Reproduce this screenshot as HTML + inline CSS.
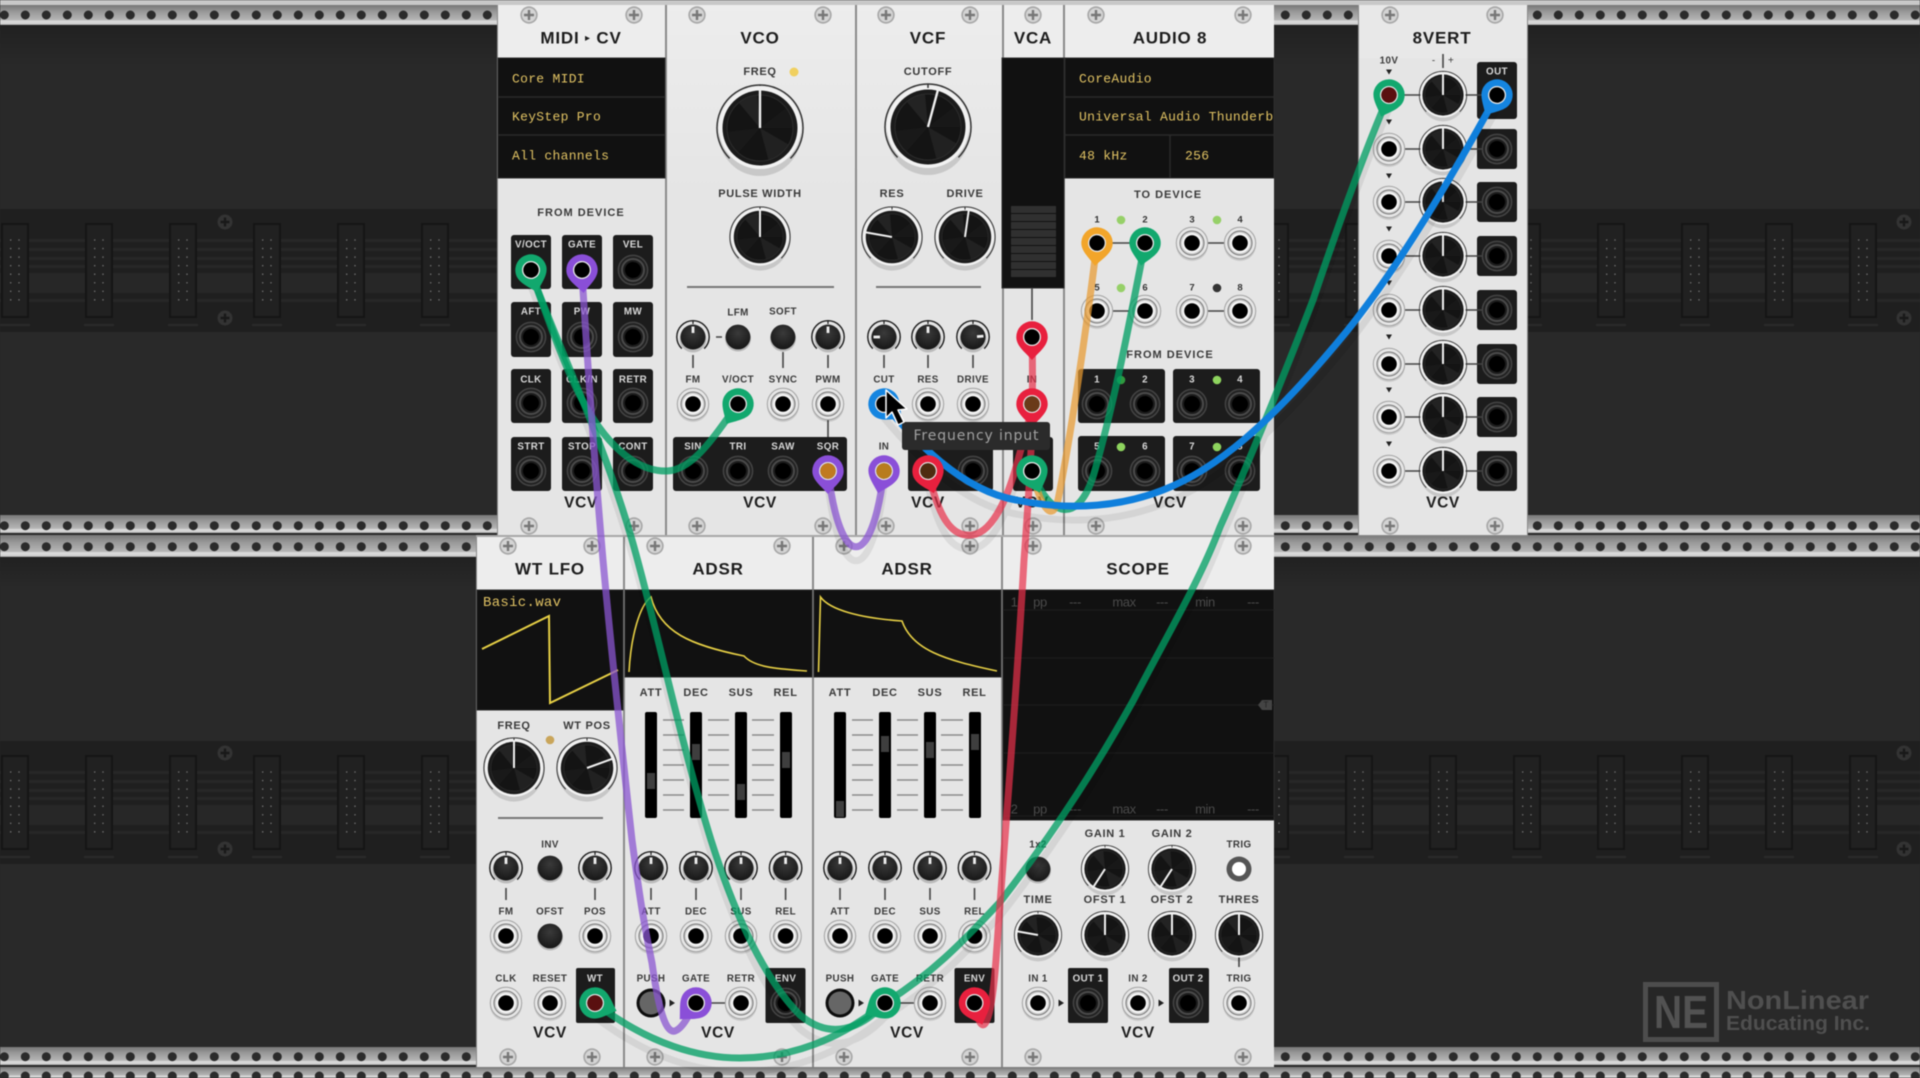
<!DOCTYPE html>
<html lang="en">
<head>
<meta charset="utf-8">
<title>VCV Rack patch</title>
<style>
html,body{margin:0;padding:0;background:#292929;width:1920px;height:1078px;overflow:hidden}
svg{display:block}
svg.root{filter:blur(.45px)}
text{font-family:"Liberation Sans","DejaVu Sans",sans-serif;text-anchor:middle;dominant-baseline:central}
.t{font-size:17px;font-weight:bold;fill:#1d1d1d;letter-spacing:.8px}
.h{font-size:11px;font-weight:bold;fill:#3a3a3a;letter-spacing:.7px}
.g{font-size:11px;font-weight:bold;fill:#3a3a3a;letter-spacing:1px}
.a{font-size:9.8px;font-weight:bold;fill:#3a3a3a;letter-spacing:.4px}
.w{font-size:9.8px;font-weight:bold;fill:#d8d8d8;letter-spacing:.4px}
.m{font-family:"Liberation Mono",monospace;font-size:13px;fill:#e0c263;text-anchor:start;letter-spacing:.3px}
.v{font-size:15.5px;font-weight:bold;fill:#1d1d1d;letter-spacing:.6px}
.s{font-size:13px;fill:#4a4a4a;letter-spacing:-.4px}
.n{font-size:9.5px;font-weight:bold;fill:#333}
</style>
</head>
<body>
<svg class="root" xmlns="http://www.w3.org/2000/svg" width="1920" height="1078" viewBox="0 0 1920 1078">
<defs>
<linearGradient id="rail" x1="0" y1="0" x2="0" y2="1">
<stop offset="0" stop-color="#777"/><stop offset=".35" stop-color="#9a9a9a"/><stop offset=".75" stop-color="#b5b5b5"/><stop offset=".8" stop-color="#dcdcdc"/><stop offset=".95" stop-color="#d0d0d0"/><stop offset="1" stop-color="#8a8a8a"/>
</linearGradient>
<linearGradient id="top" x1="0" y1="0" x2="0" y2="1"><stop offset="0" stop-color="#212121"/><stop offset="1" stop-color="#292929"/></linearGradient>
<linearGradient id="fade" x1="0" y1="0" x2="0" y2="1"><stop offset="0" stop-color="#ededed"/><stop offset="1" stop-color="#e5e5e5"/></linearGradient>
<radialGradient id="btn" cx=".5" cy=".35" r=".7"><stop offset="0" stop-color="#3a3a3a"/><stop offset="1" stop-color="#141414"/></radialGradient>
<pattern id="b1" patternUnits="userSpaceOnUse" x="0" y="209" width="84" height="123">
<rect width="84" height="123" fill="#1f1f1f"/>
<rect y="30" width="84" height="3" fill="#272727"/><rect y="39" width="84" height="3" fill="#272727"/><rect y="48" width="84" height="3" fill="#272727"/><rect y="56" width="84" height="3" fill="#272727"/><rect y="64" width="84" height="20" fill="#272727"/><rect y="90" width="84" height="3" fill="#272727"/>
<rect x="0" y="115" width="30" height="2" fill="#2a2a2a"/>
<rect x="2" y="15" width="26" height="93" fill="#212121" stroke="#151515" stroke-width="2"/>
<line x1="10.7" y1="31" x2="10.7" y2="92" stroke="#6e6e6e" stroke-width="1.6" stroke-linecap="round" stroke-dasharray="0 8.55"/>
<line x1="19" y1="31" x2="19" y2="92" stroke="#6e6e6e" stroke-width="1.6" stroke-linecap="round" stroke-dasharray="0 8.55"/>
</pattern>
<pattern id="b2" patternUnits="userSpaceOnUse" x="0" y="741" width="84" height="123">
<rect width="84" height="123" fill="#1f1f1f"/>
<rect y="30" width="84" height="3" fill="#272727"/><rect y="39" width="84" height="3" fill="#272727"/><rect y="48" width="84" height="3" fill="#272727"/><rect y="56" width="84" height="3" fill="#272727"/><rect y="64" width="84" height="20" fill="#272727"/><rect y="90" width="84" height="3" fill="#272727"/>
<rect x="0" y="115" width="30" height="2" fill="#2a2a2a"/>
<rect x="2" y="15" width="26" height="93" fill="#212121" stroke="#151515" stroke-width="2"/>
<line x1="10.7" y1="31" x2="10.7" y2="92" stroke="#6e6e6e" stroke-width="1.6" stroke-linecap="round" stroke-dasharray="0 8.55"/>
<line x1="19" y1="31" x2="19" y2="92" stroke="#6e6e6e" stroke-width="1.6" stroke-linecap="round" stroke-dasharray="0 8.55"/>
</pattern>
<g id="s"><circle r="8.7" fill="#a8a8a8"/><circle r="7" fill="#d4d4d4"/><path d="M-5 0H5M0-5V5" stroke="#777" stroke-width="2.4"/></g>
<g id="rs"><circle r="7.5" fill="#333"/><path d="M-4.5 0H4.5M0-4.5V4.5" stroke="#191919" stroke-width="2.4"/></g>
<g id="p"><circle cy="2" r="16" fill="#000" opacity=".12"/><circle r="15.7" fill="#e6e6e6" stroke="#a2a2a2" stroke-width="1"/><circle r="12" fill="#cfcfcf" stroke="#777" stroke-width="1"/><circle r="10" fill="#f7f7f7"/><circle r="7.8" fill="#000"/></g>
<g id="d"><circle r="14.6" fill="#212121" stroke="#444" stroke-width="1.5"/><circle r="11" fill="#1c1c1c" stroke="#4a4a4a" stroke-width="2"/><circle r="8" fill="#000"/></g>
<g id="k"><circle cy="7" r="41" fill="#000" opacity=".13"/><circle r="41" fill="#f2f2f2"/><path d="M-30.4 30.4A43 43 0 1 1 30.4 30.4" fill="none" stroke="#333" stroke-width="1.5"/><line x1="0" y1="-43" x2="0" y2="-39" stroke="#333" stroke-width="1.5"/><circle r="37.5" fill="#1b1b1b"/><circle r="33" fill="#141414"/><path d="M0 0L-21-25A33 33 0 0 1-3-33Z" fill="#232323"/><path d="M0 0L28.6 16.5A33 33 0 0 1 8.5 31.9Z" fill="#212121"/><path d="M0 0L33 0A33 33 0 0 0 26-20Z" fill="#181818"/><path d="M0 0L-33 4A33 33 0 0 0-22 25Z" fill="#191919"/><circle r="33" fill="none" stroke="#2c2c2c" stroke-width="1"/></g>
<g id="k30"><use href="#k" transform="scale(.7)"/></g>
<g id="k24"><use href="#k" transform="scale(.55)"/></g>
<line id="q" x1="0" y1="0" x2="0" y2="-42" stroke="#f0f0f0" stroke-width="2.4"/>
<line id="q30" x1="0" y1="0" x2="0" y2="-28" stroke="#f0f0f0" stroke-width="2"/>
<line id="q24" x1="0" y1="0" x2="0" y2="-23" stroke="#f0f0f0" stroke-width="2"/>
<g id="t"><circle cy="2" r="13.5" fill="#000" opacity=".18"/><path d="M-11.2 11.6A16.2 16.2 0 1 1 11.2 11.6" fill="none" stroke="#1d1d1d" stroke-width="1.4"/><line x1="0" y1="-16" x2="0" y2="-13" stroke="#1d1d1d" stroke-width="1.2"/><circle r="12.5" fill="url(#btn)"/></g>
<line id="tp" x1="0" y1="-4" x2="0" y2="-10.5" stroke="#eee" stroke-width="2.8"/>
<g id="b"><circle cy="1.5" r="13" fill="#000" opacity=".2"/><circle r="12.4" fill="url(#btn)"/></g>
<g id="n"><path d="M-15.7 0A15.7 15.7 0 1 1 15.7 0C15.7 9 7 15 0 23C-7 15-15.7 9-15.7 0Z"/><circle r="9" fill="#e8e8e8"/><circle r="7.7" fill="#000"/></g>
<path id="tr" d="M-3-2.5H3L0 2.5Z" fill="#222"/>
<path id="tr2" d="M-2.5-3.5V3.5L3 0Z" fill="#222"/>
<path id="cG1" d="M531 272C545 310 565 370 585 405C610 450 640 472 667 471C695 470 718 430 738 404"/>
<path id="cG2" d="M531 272C555 340 600 430 632 540C655 620 680 740 711 840C730 900 760 975 800 1015C830 1040 860 1030 885 1003"/>
<path id="cG3" d="M595 1003C650 1045 700 1058 740 1058C790 1058 840 1040 885 1003"/>
<path id="cG4" d="M885 1003C930 975 960 945 1000 902C1060 825 1100 760 1133 701C1170 630 1200 580 1220 527C1250 460 1290 360 1313 300C1340 220 1365 150 1389 95"/>
<path id="cG5" d="M1145 243C1130 320 1115 400 1095 470C1080 525 1050 520 1032 471"/>
<path id="cO" d="M1097 243C1085 340 1070 440 1058 500C1052 525 1040 505 1032 471"/>
<path id="cB" d="M884 404C915 440 960 490 1016 500C1075 512 1125 505 1163 490C1215 470 1270 425 1347 331C1400 265 1450 180 1497 95"/>
<path id="cP1" d="M582 270L583 290C590 400 596 480 603 560C612 660 622 750 632 840C640 900 645 930 652 963C660 1020 668 1036 677 1030C685 1025 690 1012 696 1003"/>
<path id="cP2" d="M828 471C840 572 872 572 884 471"/>
<path id="cR1" d="M928 471C940 525 955 537 972 535C995 532 1010 490 1018 460C1024 438 1030 420 1032 404"/>
<path id="cR2" d="M1032 337C1034 420 1030 480 1024 560C1015 720 1005 830 996 960C990 1040 980 1035 974.5 1003"/>
</defs>

<!-- rack background -->
<rect width="1920" height="1078" fill="#292929"/>
<rect y="25" width="1920" height="40" fill="url(#top)"/>
<rect y="557" width="1920" height="30" fill="url(#top)"/>
<rect y="209" width="1920" height="123" fill="url(#b1)"/>
<rect y="741" width="1920" height="123" fill="url(#b2)"/>
<use href="#rs" x="225" y="222"/><use href="#rs" x="225" y="318"/><use href="#rs" x="1904" y="222"/><use href="#rs" x="1904" y="318"/>
<use href="#rs" x="225" y="753"/><use href="#rs" x="225" y="849"/><use href="#rs" x="1904" y="753"/><use href="#rs" x="1904" y="849"/>

<!-- rails -->
<rect width="1920" height="5" fill="#c8c8c8"/>
<rect y="5" width="1920" height="20" fill="url(#rail)"/>
<rect y="515" width="1920" height="18" fill="url(#rail)"/>
<rect y="535" width="1920" height="22" fill="url(#rail)"/>
<rect y="1047" width="1920" height="18" fill="url(#rail)"/>
<rect y="1067" width="1920" height="11" fill="url(#rail)"/>
<g stroke="#2b2b2b" stroke-width="9" stroke-linecap="round" stroke-dasharray="0 21">
<line x1="4.3" y1="15" x2="1920" y2="15"/><line x1="4.3" y1="525.7" x2="1920" y2="525.7"/><line x1="4.3" y1="546.7" x2="1920" y2="546.7"/><line x1="4.3" y1="1056.7" x2="1920" y2="1056.7"/><line x1="4.3" y1="1076" x2="1920" y2="1076"/>
</g>

<!-- module backings -->
<rect x="497" y="5" width="777" height="531" fill="#8a8a8a"/>
<rect x="476" y="537" width="798" height="530" fill="#8a8a8a"/>
<rect x="1358" y="5" width="170" height="531" fill="#8a8a8a"/>
<rect x="476" y="535" width="798" height="2" fill="#a8a8a8"/>
<g fill="#e5e5e5">
<rect x="498" y="5" width="167" height="530"/><rect x="1004" y="5" width="59" height="530"/><rect x="1065" y="5" width="209" height="530"/><rect x="1359" y="5" width="168" height="530"/>
<rect x="667" y="200" width="188" height="335"/><rect x="857" y="200" width="145" height="335"/>
<rect x="477" y="537" width="146" height="530"/><rect x="625" y="537" width="187" height="530"/><rect x="814" y="537" width="187" height="530"/><rect x="1003" y="537" width="271" height="530"/>
</g>
<rect x="667" y="5" width="188" height="195" fill="url(#fade)"/><rect x="857" y="5" width="145" height="195" fill="url(#fade)"/>
<g fill="#ededed">
<rect x="498" y="5" width="167" height="53"/><rect x="1004" y="5" width="59" height="53"/><rect x="1065" y="5" width="209" height="53"/><rect x="1359" y="5" width="168" height="53" fill="#e8e8e8"/>
<rect x="477" y="537" width="146" height="53"/><rect x="625" y="537" width="187" height="53"/><rect x="814" y="537" width="187" height="53"/><rect x="1003" y="537" width="271" height="53"/>
</g>

<!-- displays -->
<g fill="#111" stroke="#2c2c2c" stroke-width="1">
<rect x="498" y="58" width="167" height="120"/><rect x="1002" y="58" width="62" height="230"/><rect x="1065" y="58" width="209" height="120"/>
<rect x="477" y="590" width="146" height="120"/><rect x="625" y="590" width="187" height="87"/><rect x="814" y="590" width="187" height="87"/><rect x="1003" y="590" width="271" height="230"/>
</g>
<g stroke="#2a2a2a" stroke-width="1.5">
<path d="M498 97H665M498 135H665M1065 97H1274M1065 135H1274M1170 135V178"/>
<path d="M1003 610H1274M1003 658H1274M1003 705H1274M1003 753H1274M1003 816H1274" stroke-width="1" stroke="#1e1e1e"/>
</g>
<g fill="#303030"><rect x="1011" y="206" width="45" height="7"/><rect x="1011" y="214" width="45" height="7"/><rect x="1011" y="222" width="45" height="7"/><rect x="1011" y="230" width="45" height="7"/><rect x="1011" y="238" width="45" height="7"/><rect x="1011" y="246" width="45" height="7"/><rect x="1011" y="254" width="45" height="7"/><rect x="1011" y="262" width="45" height="7"/><rect x="1011" y="270" width="45" height="7"/></g>

<!-- dark port boxes -->
<g fill="#1c1c1c">
<rect x="511" y="235" width="40" height="54" rx="3"/><rect x="562" y="235" width="40" height="54" rx="3"/><rect x="613" y="235" width="40" height="54" rx="3"/>
<rect x="511" y="302" width="40" height="55" rx="3"/><rect x="562" y="302" width="40" height="55" rx="3"/><rect x="613" y="302" width="40" height="55" rx="3"/>
<rect x="511" y="369" width="40" height="54" rx="3"/><rect x="562" y="369" width="40" height="54" rx="3"/><rect x="613" y="369" width="40" height="54" rx="3"/>
<rect x="511" y="437" width="40" height="54" rx="3"/><rect x="562" y="437" width="40" height="54" rx="3"/><rect x="613" y="437" width="40" height="54" rx="3"/>
<rect x="673" y="437" width="174" height="54" rx="3"/>
<rect x="908" y="437" width="85" height="54" rx="3"/>
<rect x="1013" y="437" width="40" height="54" rx="3"/>
<rect x="1078" y="369" width="87" height="54" rx="3"/><rect x="1173" y="369" width="87" height="54" rx="3"/><rect x="1078" y="436" width="87" height="55" rx="3"/><rect x="1173" y="436" width="87" height="55" rx="3"/>
<rect x="1477" y="62" width="40" height="57" rx="3"/><rect x="1477" y="129" width="40" height="40" rx="3"/><rect x="1477" y="182" width="40" height="40" rx="3"/><rect x="1477" y="236" width="40" height="40" rx="3"/><rect x="1477" y="290" width="40" height="40" rx="3"/><rect x="1477" y="344" width="40" height="40" rx="3"/><rect x="1477" y="397" width="40" height="40" rx="3"/><rect x="1477" y="451" width="40" height="40" rx="3"/>
<rect x="576" y="968" width="39" height="55" rx="2"/><rect x="765.5" y="968" width="40" height="55" rx="2"/><rect x="954.5" y="968" width="40" height="55" rx="2"/><rect x="1068" y="968" width="40" height="55" rx="2"/><rect x="1169" y="968" width="40" height="55" rx="2"/>
</g>

<!-- connector lines -->
<g stroke="#444" stroke-width="1.6" fill="none">
<path d="M687 287H834M876 287H981M498 818H603" stroke="#777" stroke-width="2"/>
<path d="M693 355V368M783 352V368M828 355V368M828 420V437M716 337H722"/>
<path d="M884 355V368M928 355V368M973 355V368M1032 288V320"/>
<path d="M1097 243H1145M1192 243H1240M1097 311H1145M1192 311H1240"/>
<path d="M1389 95H1497M1389 149H1497M1389 202H1497M1389 256H1497M1389 310H1497M1389 364H1497M1389 417H1497M1389 471H1497"/>
<path d="M506 888V900M595 888V900M651 888V900M696 888V900M741 888V900M785.6 888V900M840 888V900M885 888V900M930 888V900M974.5 888V900M1239 955V967"/>
<path d="M696 1003H741M885 1003H930M1443 54V68"/>
</g>

<!-- ADSR ticks -->
<g stroke="#8c8c8c" stroke-width="1.6">
<path d="M663 720H684M663 735H684M663 750H684M663 765H684M663 780H684M663 795H684M663 810H684M708 720H729M708 735H729M708 750H729M708 765H729M708 780H729M708 795H729M708 810H729M752 720H774M752 735H774M752 750H774M752 765H774M752 780H774M752 795H774M752 810H774"/>
<path d="M852 720H873M852 735H873M852 750H873M852 765H873M852 780H873M852 795H873M852 810H873M897 720H918M897 735H918M897 750H918M897 765H918M897 780H918M897 795H918M897 810H918M941 720H963M941 735H963M941 750H963M941 765H963M941 780H963M941 795H963M941 810H963"/>
</g>
<g fill="#000">
<rect x="645" y="712" width="12" height="106" rx="2"/><rect x="690" y="712" width="12" height="106" rx="2"/><rect x="735" y="712" width="12" height="106" rx="2"/><rect x="780" y="712" width="12" height="106" rx="2"/>
<rect x="834" y="712" width="12" height="106" rx="2"/><rect x="879" y="712" width="12" height="106" rx="2"/><rect x="924" y="712" width="12" height="106" rx="2"/><rect x="969" y="712" width="12" height="106" rx="2"/>
</g>
<g fill="#3e3e3e">
<rect x="647" y="773" width="8" height="16"/><rect x="692" y="744" width="8" height="16"/><rect x="737" y="784" width="8" height="16"/><rect x="782" y="752" width="8" height="16"/>
<rect x="836" y="801" width="8" height="16"/><rect x="881" y="736" width="8" height="16"/><rect x="926" y="742" width="8" height="16"/><rect x="971" y="734" width="8" height="16"/>
</g>

<!-- screws -->
<use href="#s" x="529" y="15"/><use href="#s" x="634" y="15"/><use href="#s" x="697" y="15"/><use href="#s" x="823" y="15"/><use href="#s" x="886" y="15"/><use href="#s" x="970" y="15"/><use href="#s" x="1033" y="15"/><use href="#s" x="1096" y="15"/><use href="#s" x="1243" y="15"/><use href="#s" x="1390" y="15"/><use href="#s" x="1495" y="15"/>
<use href="#s" x="529" y="526"/><use href="#s" x="634" y="526"/><use href="#s" x="697" y="526"/><use href="#s" x="823" y="526"/><use href="#s" x="886" y="526"/><use href="#s" x="970" y="526"/><use href="#s" x="1033" y="526"/><use href="#s" x="1096" y="526"/><use href="#s" x="1243" y="526"/><use href="#s" x="1390" y="526"/><use href="#s" x="1495" y="526"/>
<use href="#s" x="508" y="546"/><use href="#s" x="592" y="546"/><use href="#s" x="655" y="546"/><use href="#s" x="782" y="546"/><use href="#s" x="844" y="546"/><use href="#s" x="970" y="546"/><use href="#s" x="1033" y="546"/><use href="#s" x="1243" y="546"/>
<use href="#s" x="508" y="1057"/><use href="#s" x="592" y="1057"/><use href="#s" x="655" y="1057"/><use href="#s" x="782" y="1057"/><use href="#s" x="844" y="1057"/><use href="#s" x="970" y="1057"/><use href="#s" x="1033" y="1057"/><use href="#s" x="1243" y="1057"/>

<!-- titles -->
<text class="t" x="581" y="38">MIDI <tspan style="font-size:10px">▸</tspan> CV</text><text class="t" x="760" y="38">VCO</text><text class="t" x="928" y="38">VCF</text><text class="t" x="1033" y="38">VCA</text><text class="t" x="1170" y="38">AUDIO 8</text><text class="t" x="1442" y="38">8VERT</text>
<text class="t" x="550" y="569">WT LFO</text><text class="t" x="718" y="569">ADSR</text><text class="t" x="907" y="569">ADSR</text><text class="t" x="1138" y="569">SCOPE</text>

<!-- mono text -->
<text class="m" x="512" y="79">Core MIDI</text><text class="m" x="512" y="117">KeyStep Pro</text><text class="m" x="512" y="156">All channels</text>
<text class="m" x="1079" y="79">CoreAudio</text>
<svg x="1065" y="98" width="209" height="36"><text class="m" x="14" y="19">Universal Audio Thunderbolt</text></svg>
<text class="m" x="1079" y="156">48 kHz</text><text class="m" x="1185" y="156">256</text>
<text class="m" x="483" y="603" style="font-size:14px">Basic.wav</text>

<!-- labels MIDI -->
<text class="g" x="581" y="213">FROM DEVICE</text>
<text class="w" x="531" y="245">V/OCT</text><text class="w" x="582" y="245">GATE</text><text class="w" x="633" y="245">VEL</text>
<text class="w" x="531" y="312">AFT</text><text class="w" x="582" y="312">PW</text><text class="w" x="633" y="312">MW</text>
<text class="w" x="531" y="380">CLK</text><text class="w" x="582" y="380">CLK/N</text><text class="w" x="633" y="380">RETR</text>
<text class="w" x="531" y="447">STRT</text><text class="w" x="582" y="447">STOP</text><text class="w" x="633" y="447">CONT</text>
<!-- VCO -->
<text class="h" x="760" y="72">FREQ</text><circle cx="794" cy="72" r="4.5" fill="#f0d060"/>
<text class="h" x="760" y="194">PULSE WIDTH</text>
<text class="a" x="738" y="313">LFM</text><text class="a" x="783" y="312">SOFT</text>
<text class="a" x="693" y="380">FM</text><text class="a" x="738" y="380">V/OCT</text><text class="a" x="783" y="380">SYNC</text><text class="a" x="828" y="380">PWM</text>
<text class="w" x="693" y="447">SIN</text><text class="w" x="738" y="447">TRI</text><text class="w" x="783" y="447">SAW</text><text class="w" x="828" y="447">SQR</text>
<!-- VCF -->
<text class="h" x="928" y="72">CUTOFF</text><text class="h" x="892" y="194">RES</text><text class="h" x="965" y="194">DRIVE</text>
<text class="a" x="884" y="380">CUT</text><text class="a" x="928" y="380">RES</text><text class="a" x="973" y="380">DRIVE</text><text class="a" x="884" y="447">IN</text>
<text class="a" x="1032" y="380">IN</text>
<!-- Audio -->
<text class="g" x="1168" y="195">TO DEVICE</text><text class="g" x="1170" y="355">FROM DEVICE</text>
<text class="n" x="1097" y="220">1</text><text class="n" x="1145" y="220">2</text><text class="n" x="1192" y="220">3</text><text class="n" x="1240" y="220">4</text>
<text class="n" x="1097" y="288">5</text><text class="n" x="1145" y="288">6</text><text class="n" x="1192" y="288">7</text><text class="n" x="1240" y="288">8</text>
<circle cx="1121" cy="220" r="4.3" fill="#96d068"/><circle cx="1217" cy="220" r="4.3" fill="#96d068"/><circle cx="1121" cy="288" r="4.3" fill="#96d068"/><circle cx="1217" cy="288" r="4.3" fill="#333"/>
<text class="w" x="1097" y="380">1</text><text class="w" x="1145" y="380">2</text><text class="w" x="1192" y="380">3</text><text class="w" x="1240" y="380">4</text>
<text class="w" x="1097" y="447">5</text><text class="w" x="1145" y="447">6</text><text class="w" x="1192" y="447">7</text><text class="w" x="1240" y="447">8</text>
<circle cx="1121" cy="380" r="4.3" fill="#2f9a3f"/><circle cx="1217" cy="380" r="4.3" fill="#8ed45e"/><circle cx="1121" cy="447" r="4.3" fill="#8ed45e"/><circle cx="1217" cy="447" r="4.3" fill="#8ed45e"/>
<!-- 8VERT -->
<text class="a" x="1389" y="61">10V</text><text class="a" x="1443" y="61" xml:space="preserve" style="font-weight:normal">-    +</text><text class="w" x="1497" y="72">OUT</text>
<use href="#tr" x="1389" y="72"/><use href="#tr" x="1389" y="122"/><use href="#tr" x="1389" y="176"/><use href="#tr" x="1389" y="229"/><use href="#tr" x="1389" y="283"/><use href="#tr" x="1389" y="337"/><use href="#tr" x="1389" y="390"/><use href="#tr" x="1389" y="444"/>
<!-- WT LFO -->
<text class="h" x="514" y="726">FREQ</text><text class="h" x="587" y="726">WT POS</text><circle cx="550" cy="740" r="4.3" fill="#c9a55a"/>
<text class="a" x="550" y="845">INV</text><text class="a" x="506" y="912">FM</text><text class="a" x="550" y="912">OFST</text><text class="a" x="595" y="912">POS</text>
<text class="a" x="506" y="979">CLK</text><text class="a" x="550" y="979">RESET</text><text class="w" x="595" y="979">WT</text>
<!-- ADSR 1 -->
<text class="h" x="651" y="693">ATT</text><text class="h" x="696" y="693">DEC</text><text class="h" x="741" y="693">SUS</text><text class="h" x="785.6" y="693">REL</text>
<text class="a" x="651" y="912">ATT</text><text class="a" x="696" y="912">DEC</text><text class="a" x="741" y="912">SUS</text><text class="a" x="785.6" y="912">REL</text>
<text class="a" x="651" y="979">PUSH</text><text class="a" x="696" y="979">GATE</text><text class="a" x="741" y="979">RETR</text><text class="w" x="785.6" y="979">ENV</text>
<!-- ADSR 2 -->
<text class="h" x="840" y="693">ATT</text><text class="h" x="885" y="693">DEC</text><text class="h" x="930" y="693">SUS</text><text class="h" x="974.5" y="693">REL</text>
<text class="a" x="840" y="912">ATT</text><text class="a" x="885" y="912">DEC</text><text class="a" x="930" y="912">SUS</text><text class="a" x="974.5" y="912">REL</text>
<text class="a" x="840" y="979">PUSH</text><text class="a" x="885" y="979">GATE</text><text class="a" x="930" y="979">RETR</text><text class="w" x="974.5" y="979">ENV</text>
<!-- Scope -->
<text class="s" x="1014" y="602">1</text><text class="s" x="1040" y="602">pp</text><text class="s" x="1075" y="602">---</text><text class="s" x="1124" y="602">max</text><text class="s" x="1162" y="602">---</text><text class="s" x="1205" y="602">min</text><text class="s" x="1253" y="602">---</text>
<text class="s" x="1014" y="809">2</text><text class="s" x="1040" y="809">pp</text><text class="s" x="1075" y="809">---</text><text class="s" x="1124" y="809">max</text><text class="s" x="1162" y="809">---</text><text class="s" x="1205" y="809">min</text><text class="s" x="1253" y="809">---</text>
<path d="M1272 700H1262L1258 705L1262 710H1272Z" fill="#444"/><text x="1266" y="705" style="font-size:8px;fill:#222">T</text>
<text class="a" x="1038" y="845">1x2</text><text class="h" x="1105" y="834">GAIN 1</text><text class="h" x="1172" y="834">GAIN 2</text><text class="a" x="1239" y="845">TRIG</text>
<text class="h" x="1038" y="900">TIME</text><text class="h" x="1105" y="900">OFST 1</text><text class="h" x="1172" y="900">OFST 2</text><text class="h" x="1239" y="900">THRES</text>
<text class="a" x="1038" y="979">IN 1</text><text class="w" x="1088" y="979">OUT 1</text><text class="a" x="1138" y="979">IN 2</text><text class="w" x="1188" y="979">OUT 2</text><text class="a" x="1239" y="979">TRIG</text>
<use href="#tr2" x="1061" y="1003"/><use href="#tr2" x="1161" y="1003"/><use href="#tr2" x="672" y="1003"/><use href="#tr2" x="861" y="1003"/>

<!-- VCV logos -->
<text class="v" x="581" y="503">VCV</text><text class="v" x="760" y="503">VCV</text><text class="v" x="928" y="503">VCV</text><text class="v" x="1032" y="503">VCV</text><text class="v" x="1170" y="503">VCV</text><text class="v" x="1443" y="503">VCV</text>
<text class="v" x="550" y="1033">VCV</text><text class="v" x="718" y="1033">VCV</text><text class="v" x="907" y="1033">VCV</text><text class="v" x="1138" y="1033">VCV</text>

<!-- waveforms -->
<g fill="none" stroke="#e6cf45">
<path d="M482 649L549 616L550 703L618 670" stroke-width="2"/>
<path d="M629 672C631 635 640 605 651 597C660 632 690 645 744 656C755 668 780 669 807 671" stroke-width="1.6"/>
<path d="M818.5 672L820.5 597C830 610 860 618 902 621C912 650 945 660 997 671" stroke-width="1.6"/>
</g>

<!-- large and medium knobs -->
<use href="#k" x="760" y="128"/><use href="#q" transform="translate(760 128)"/>
<use href="#k30" x="760" y="237"/><use href="#q30" transform="translate(760 237)"/>
<use href="#k" x="928" y="127"/><use href="#q" transform="translate(928 127) rotate(15)"/>
<use href="#k30" x="892" y="237"/><use href="#q30" transform="translate(892 237) rotate(-80)"/>
<use href="#k30" x="965" y="237"/><use href="#q30" transform="translate(965 237) rotate(8)"/>
<use href="#k30" x="514" y="768"/><use href="#q30" transform="translate(514 768)"/>
<use href="#k30" x="587" y="768"/><use href="#q30" transform="translate(587 768) rotate(70)"/>
<use href="#k24" x="1105" y="869"/><use href="#q24" transform="translate(1105 869) rotate(213)"/>
<use href="#k24" x="1172" y="869"/><use href="#q24" transform="translate(1172 869) rotate(213)"/>
<use href="#k24" x="1038" y="935"/><use href="#q24" transform="translate(1038 935) rotate(-80)"/>
<use href="#k24" x="1105" y="935"/><use href="#q24" transform="translate(1105 935)"/>
<use href="#k24" x="1172" y="935"/><use href="#q24" transform="translate(1172 935)"/>
<use href="#k24" x="1239" y="935"/><use href="#q24" transform="translate(1239 935)"/>
<use href="#k24" x="1443" y="95"/><use href="#q24" transform="translate(1443 95)"/>
<use href="#k24" x="1443" y="149"/><use href="#q24" transform="translate(1443 149)"/>
<use href="#k24" x="1443" y="202"/><use href="#q24" transform="translate(1443 202)"/>
<use href="#k24" x="1443" y="256"/><use href="#q24" transform="translate(1443 256)"/>
<use href="#k24" x="1443" y="310"/><use href="#q24" transform="translate(1443 310)"/>
<use href="#k24" x="1443" y="364"/><use href="#q24" transform="translate(1443 364)"/>
<use href="#k24" x="1443" y="417"/><use href="#q24" transform="translate(1443 417)"/>
<use href="#k24" x="1443" y="471"/><use href="#q24" transform="translate(1443 471)"/>

<!-- trim knobs -->
<use href="#t" x="693" y="337"/><use href="#tp" x="693" y="337"/><use href="#t" x="828" y="337"/><use href="#tp" x="828" y="337"/>
<use href="#t" x="884" y="337"/><use href="#tp" transform="translate(884 337) rotate(-90)"/><use href="#t" x="928" y="337"/><use href="#tp" x="928" y="337"/><use href="#t" x="973" y="337"/><use href="#tp" transform="translate(973 337) rotate(85)"/>
<use href="#t" x="506" y="868"/><use href="#tp" x="506" y="868"/><use href="#t" x="595" y="868"/><use href="#tp" x="595" y="868"/>
<use href="#t" x="651" y="868"/><use href="#tp" x="651" y="868"/><use href="#t" x="696" y="868"/><use href="#tp" x="696" y="868"/><use href="#t" x="741" y="868"/><use href="#tp" x="741" y="868"/><use href="#t" x="785.6" y="868"/><use href="#tp" x="785.6" y="868"/>
<use href="#t" x="840" y="868"/><use href="#tp" x="840" y="868"/><use href="#t" x="885" y="868"/><use href="#tp" x="885" y="868"/><use href="#t" x="930" y="868"/><use href="#tp" x="930" y="868"/><use href="#t" x="974.5" y="868"/><use href="#tp" x="974.5" y="868"/>

<!-- buttons -->
<use href="#b" x="738" y="337"/><use href="#b" x="783" y="337"/><use href="#b" x="550" y="868"/><use href="#b" x="550" y="936"/><use href="#b" x="1038" y="869"/>
<circle cx="1239" cy="869" r="12.5" fill="#555"/><circle cx="1239" cy="869" r="7" fill="#fff"/>
<circle cx="651" cy="1003" r="14.5" fill="#0d0d0d"/><circle cx="651" cy="1003" r="11.5" fill="#666"/>
<circle cx="840" cy="1003" r="14.5" fill="#0d0d0d"/><circle cx="840" cy="1003" r="11.5" fill="#666"/>

<!-- silver ports -->
<use href="#p" x="693" y="404"/><use href="#p" x="783" y="404"/><use href="#p" x="828" y="404"/><use href="#p" x="928" y="404"/><use href="#p" x="973" y="404"/>
<use href="#p" x="1192" y="243"/><use href="#p" x="1240" y="243"/><use href="#p" x="1097" y="311"/><use href="#p" x="1145" y="311"/><use href="#p" x="1192" y="311"/><use href="#p" x="1240" y="311"/>
<use href="#p" x="1389" y="149"/><use href="#p" x="1389" y="202"/><use href="#p" x="1389" y="256"/><use href="#p" x="1389" y="310"/><use href="#p" x="1389" y="364"/><use href="#p" x="1389" y="417"/><use href="#p" x="1389" y="471"/>
<use href="#p" x="506" y="936"/><use href="#p" x="595" y="936"/><use href="#p" x="506" y="1003"/><use href="#p" x="550" y="1003"/>
<use href="#p" x="651" y="936"/><use href="#p" x="696" y="936"/><use href="#p" x="741" y="936"/><use href="#p" x="785.6" y="936"/><use href="#p" x="741" y="1003"/>
<use href="#p" x="840" y="936"/><use href="#p" x="885" y="936"/><use href="#p" x="930" y="936"/><use href="#p" x="974.5" y="936"/><use href="#p" x="930" y="1003"/>
<use href="#p" x="1038" y="1003"/><use href="#p" x="1138" y="1003"/><use href="#p" x="1239" y="1003"/>

<!-- dark ports -->
<use href="#d" x="633" y="270"/>
<use href="#d" x="531" y="337"/><use href="#d" x="582" y="337"/><use href="#d" x="633" y="337"/>
<use href="#d" x="531" y="403"/><use href="#d" x="582" y="403"/><use href="#d" x="633" y="403"/>
<use href="#d" x="531" y="471"/><use href="#d" x="582" y="471"/><use href="#d" x="633" y="471"/>
<use href="#d" x="693" y="471"/><use href="#d" x="738" y="471"/><use href="#d" x="783" y="471"/><use href="#d" x="973" y="471"/>
<use href="#d" x="1097" y="404"/><use href="#d" x="1145" y="404"/><use href="#d" x="1192" y="404"/><use href="#d" x="1240" y="404"/><use href="#d" x="1097" y="471"/><use href="#d" x="1145" y="471"/><use href="#d" x="1192" y="471"/><use href="#d" x="1240" y="471"/>
<use href="#d" x="1497" y="149"/><use href="#d" x="1497" y="202"/><use href="#d" x="1497" y="256"/><use href="#d" x="1497" y="310"/><use href="#d" x="1497" y="364"/><use href="#d" x="1497" y="417"/><use href="#d" x="1497" y="471"/>
<use href="#d" x="785.6" y="1003"/><use href="#d" x="1088" y="1003"/><use href="#d" x="1188" y="1003"/>

<!-- cable shadows -->
<g fill="none" stroke="#000" stroke-width="7" opacity=".07" transform="translate(0 14)">
<use href="#cG3"/><use href="#cG4"/><use href="#cB"/><use href="#cR1"/><use href="#cP2"/><use href="#cG2"/>
</g>

<!-- cables -->
<g fill="none" stroke-width="7" stroke-linecap="round">
<g stroke="#009e63"><use href="#cG1" opacity=".76"/><use href="#cG2" opacity=".76"/><use href="#cG3" opacity=".76"/><use href="#cG4" opacity=".76"/><use href="#cG5" opacity=".76"/></g>
<use href="#cO" stroke="#e89a30" opacity=".72"/>
<g stroke="#8a55d0"><use href="#cP1" opacity=".75"/><use href="#cP2" opacity=".75"/></g>
<g stroke="#e8304a"><use href="#cR1" opacity=".7"/><use href="#cR2" opacity=".7"/></g>
<use href="#cB" stroke="#0f7fdc"/>
</g>

<!-- plugs -->
<g fill="#12a86e">
<use href="#n" transform="translate(531 270) rotate(-15)"/><use href="#n" transform="translate(738 404) rotate(30)"/><use href="#n" transform="translate(1032 471) rotate(-20)"/><use href="#n" transform="translate(1145 243) rotate(10)"/><use href="#n" transform="translate(1389 95) rotate(20)"/><use href="#n" transform="translate(595 1003) rotate(-70)"/><use href="#n" transform="translate(885 1003) rotate(60)"/>
</g>
<g fill="#8a4fd8"><use href="#n" transform="translate(582 270) rotate(-4)"/><use href="#n" transform="translate(828 471)"/><use href="#n" transform="translate(884 471) rotate(15)"/><use href="#n" transform="translate(696 1003) rotate(45)"/></g>
<g fill="#e8203e"><use href="#n" transform="translate(928 471) rotate(-15)"/><use href="#n" transform="translate(1032 337)"/><use href="#n" transform="translate(1032 404)"/><use href="#n" transform="translate(974.5 1003) rotate(-20)"/></g>
<use href="#n" fill="#f2a52a" transform="translate(1097 243) rotate(5)"/>
<use href="#n" fill="#1585e0" transform="translate(884 404) rotate(-50)"/>
<use href="#n" fill="#1585e0" transform="translate(1497 95) rotate(30)"/>
<circle cx="828" cy="471" r="7.7" fill="#c07a20"/><circle cx="884" cy="471" r="7.7" fill="#b87c1e"/><circle cx="928" cy="471" r="7.7" fill="#4e2c10"/><circle cx="1032" cy="404" r="7.7" fill="#6a3a18"/><circle cx="1389" cy="95" r="7.7" fill="#5a1010"/><circle cx="595" cy="1003" r="7.7" fill="#5a1010"/>

<!-- tooltip -->
<rect x="902" y="422" width="148" height="28" rx="3" fill="#2b2b2b"/>
<text x="976" y="436" textLength="125" lengthAdjust="spacing" style="font-family:'DejaVu Sans',sans-serif;font-size:14px;fill:#a0a0a0">Frequency input</text>

<!-- cursor -->
<path d="M886 390L886 418L892 412L898 425L904 422L898 410L907 409Z" fill="#000" stroke="#fff" stroke-width="1.5" stroke-linejoin="round"/>

<!-- watermark -->
<rect x="1645.5" y="984.5" width="71" height="55" fill="#262626" stroke="#4d4d4d" stroke-width="5"/>
<text x="1681" y="1012" textLength="54" lengthAdjust="spacingAndGlyphs" style="font-size:46px;font-weight:bold;fill:#525252">NE</text>
<text x="1726" y="1000" style="text-anchor:start;font-size:26px;font-weight:bold;fill:#4f4f4f" textLength="143" lengthAdjust="spacingAndGlyphs">NonLinear</text>
<text x="1726" y="1024" style="text-anchor:start;font-size:20px;font-weight:bold;fill:#4f4f4f" textLength="144" lengthAdjust="spacingAndGlyphs">Educating Inc.</text>
</svg>
</body>
</html>
